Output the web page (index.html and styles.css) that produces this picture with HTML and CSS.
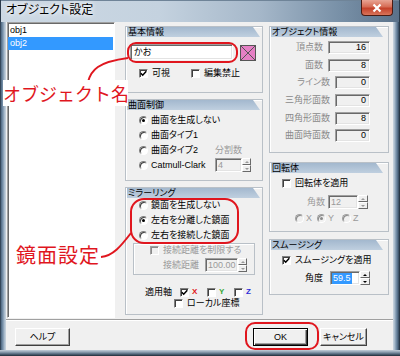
FILE: index.html
```html
<!DOCTYPE html>
<html lang="ja">
<head>
<meta charset="utf-8">
<title>オブジェクト設定</title>
<link rel="stylesheet" href="styles.css">
</head>
<body>
<div class="window">
  <div class="titlebar">
    <span class="title">オブジェクト設定</span>
    <div class="close"><svg width="12" height="10" viewBox="0 0 12 10"><path d="M2.5 1.5 L9.5 8.5 M9.5 1.5 L2.5 8.5"/></svg></div>
  </div>
  <div class="client">
    <div class="main">
      <div class="list">
        <div class="item">obj1</div>
        <div class="item sel">obj2</div>
      </div>

      <div class="col mid">
        <div class="box box-a">
          <div class="hdr">基本情報</div>
          <div class="name-row">
            <div class="edit name">かお</div>
            <svg class="swatch" width="16" height="16" viewBox="0 0 16 16"><rect x="0.5" y="0.5" width="15" height="15" fill="#e67fc5" stroke="#555"/><path d="M1 1 L15 15 M15 1 L1 15" stroke="#555" stroke-width="1" fill="none"/></svg>
          </div>
          <div class="a-cbs">
            <div class="chk w-vis"><span class="cb"><svg width="7" height="7" viewBox="0 0 7 7"><path d="M0.8 3.2 L2.7 5.2 L6.3 1.2"/></svg></span>可視</div>
            <div class="chk"><span class="cb"></span>編集禁止</div>
          </div>
        </div>

        <div class="box box-b">
          <div class="hdr">曲面制御</div>
          <div class="b-body">
            <div class="radios">
              <div class="rrow"><span class="rd on"></span>曲面を生成しない</div>
              <div class="rrow"><span class="rd"></span>曲面タイプ1</div>
              <div class="rrow"><span class="rd"></span>曲面タイプ2</div>
              <div class="rrow"><span class="rd"></span>Catmull-Clark</div>
            </div>
            <div class="div-block">
              <div class="lbl-line dis">分割数</div>
              <div class="spin dis w-div"><span class="field">4</span><span class="arrows"><i class="up"></i><i class="dn"></i></span></div>
            </div>
          </div>
        </div>

        <div class="box box-c">
          <div class="hdr">ミラーリング</div>
          <div class="radios c-radios">
            <div class="rrow"><span class="rd"></span>鏡面を生成しない</div>
            <div class="rrow"><span class="rd on"></span>左右を分離した鏡面</div>
            <div class="rrow"><span class="rd"></span>左右を接続した鏡面</div>
          </div>
          <div class="group">
            <div class="g-cb chk"><span class="cb dis-cb"></span><span class="dis">接続距離を制限する</span></div>
            <div class="g-spin"><span class="lbl dis">接続距離</span><div class="spin dis w-dist"><span class="field">100.00</span><span class="arrows"><i class="up"></i><i class="dn"></i></span></div></div>
          </div>
          <div class="axis-row">
            <span class="axis-lbl">適用軸</span>
            <div class="axis"><span class="cb"><svg width="7" height="7" viewBox="0 0 7 7"><path d="M0.8 3.2 L2.7 5.2 L6.3 1.2"/></svg></span><span class="ax-x">X</span></div>
            <div class="axis"><span class="cb"></span><span class="ax-y">Y</span></div>
            <div class="axis"><span class="cb"></span><span class="ax-z">Z</span></div>
          </div>
          <div class="local-row chk"><span class="cb"></span>ローカル座標</div>
        </div>
      </div>

      <div class="col right">
        <div class="box box-d">
          <div class="hdr">オブジェクト情報</div>
          <div class="d-rows">
            <div class="vrow"><span class="lbl">頂点数</span><span class="val wide">16</span></div>
            <div class="vrow"><span class="lbl">面数</span><span class="val wide">8</span></div>
            <div class="vrow"><span class="lbl">ライン数</span><span class="val">0</span></div>
            <div class="vrow"><span class="lbl">三角形面数</span><span class="val">0</span></div>
            <div class="vrow"><span class="lbl">四角形面数</span><span class="val">8</span></div>
            <div class="vrow"><span class="lbl">曲面時面数</span><span class="val">0</span></div>
          </div>
        </div>

        <div class="box box-e">
          <div class="hdr">回転体</div>
          <div class="e-cb chk"><span class="cb"></span>回転体を適用</div>
          <div class="e-spin"><span class="lbl dis">角数</span><div class="spin dis w-kaku"><span class="field">12</span><span class="arrows"><i class="up"></i><i class="dn"></i></span></div></div>
          <div class="e-radios">
            <div class="xr xr-x"><span class="rd dis-rd"></span><span class="dis">X</span></div>
            <div class="xr xr-y"><span class="rd dis-rd on"></span><span class="dis">Y</span></div>
            <div class="xr"><span class="rd dis-rd"></span><span class="dis">Z</span></div>
          </div>
        </div>

        <div class="box box-f">
          <div class="hdr">スムージング</div>
          <div class="f-cb chk"><span class="cb"><svg width="7" height="7" viewBox="0 0 7 7"><path d="M0.8 3.2 L2.7 5.2 L6.3 1.2"/></svg></span>スムージングを適用</div>
          <div class="f-spin"><span class="lbl">角度</span><div class="spin w-angle"><span class="field"><span class="selt">59.5</span></span><span class="arrows"><i class="up"></i><i class="dn"></i></span></div></div>
        </div>
      </div>
    </div>

    <div class="buttons">
      <div class="btn help">ヘルプ</div>
      <div class="btn ok">OK</div>
      <div class="btn cancel">キャンセル</div>
    </div>
  </div>

  <svg class="lines" width="400" height="356" viewBox="0 0 400 356">
    <path d="M88 82 C 91 70, 98 62, 128 58"/>
    <path d="M101 257 C 113 256, 121 246, 131 233"/>
  </svg>
  <div class="oval oval-a"></div>
  <div class="oval oval-c"></div>
  <div class="oval oval-ok"></div>
  <div class="note note-obj">オブジェクト名</div>
  <div class="note note-mirror">鏡面設定</div>
</div>
</body>
</html>
```
FILE: styles.css
```css
* { box-sizing: border-box; margin: 0; padding: 0; }
html, body { width: 400px; height: 356px; overflow: hidden; background: #fff; }
body {
  font-family: "Liberation Sans", "Noto Sans CJK JP", sans-serif;
  font-size: 9px;
  line-height: 1;
  color: #000;
  font-feature-settings: "palt";
}

.window {
  position: relative;
  width: 400px;
  height: 356px;
  background:
    linear-gradient(to bottom, transparent 350px, #c3cfda 350px, #8fa1b2 352px, #52677c 354px, #1f2b37 356px),
    linear-gradient(to right, #1c2834 0, #4d6680 1px, #7d96ae 3px, #b9c8d6 5px, #c9d4de 6px, #c9d4de 393px, #b9c8d6 394px, #7d96ae 396px, #4d6680 398px, #1c2834 400px);
}

.titlebar {
  height: 22px;
  display: flex;
  align-items: flex-start;
  background: linear-gradient(to right, #cdd9e4 0%, #c4d2df 40%, #a5b7c9 65%, #7890a7 85%, #5a7189 100%);
  box-shadow: inset 1px 0 0 #2a3a4a, inset -1px 0 0 #2a3a4a, inset 0 1px 0 #6f8498;
}
.title {
  margin: 3px 0 0 6px;
  font-family: "Noto Sans CJK JP", sans-serif;
  font-size: 12px;
  line-height: 12px;
  text-shadow: 0 0 4px #fff, 0 0 6px #fff;
}
.close {
  margin-left: auto;
  margin-right: 7px;
  width: 32px;
  height: 16px;
  border: 1px solid #4b1b12;
  border-top: 0;
  border-radius: 0 0 4px 4px;
  background: linear-gradient(#e8a494 0%, #d66c55 45%, #c4412a 55%, #d8745a 100%);
  display: flex;
  align-items: center;
  justify-content: center;
}
.close path { stroke: #fff; stroke-width: 2.2; fill: none; }

.client {
  margin: 0 7px 0 6px;
  height: 328px;
  background: #f0f0f0;
}

.main {
  display: flex;
  height: 298px;
  border-bottom: 1px solid #a0a0a0;
}

.list {
  margin-left: 1px;
  width: 108px;
  height: 296px;
  background: #fff;
  border: 1px solid;
  border-color: #a0a0a0 #fff #fff #a0a0a0;
  box-shadow: inset 1px 1px 0 #696969;
  padding: 1px 1px 0 0;
}
.item {
  height: 13px;
  padding-left: 2px;
  display: flex;
  align-items: center;
}
.item.sel { background: #3399ff; color: #fff; }

.col { display: flex; flex-direction: column; }
.mid { margin-left: 10px; width: 138px; }
.right { margin-left: 6px; width: 120px; }

.box {
  border: 1px solid #b9c0c7;
  box-shadow: inset 1px 1px 0 #fff;
}
.hdr {
  height: 10px;
  margin: 0 2px 0 1px;
  padding-left: 1px;
  background: linear-gradient(#a3b8ce, #bfcfdf);
  clip-path: polygon(0 0, calc(100% - 7px) 0, 100% 100%, 0 100%);
  line-height: 10px;
  white-space: nowrap;
}
.right .hdr { margin-right: 5px; }

.box-a { margin-top: 4px; height: 67px; }
.box-b { margin-top: 6px; height: 82px; }
.box-c { margin-top: 6px; height: 128px; }
.box-d { margin-top: 4px; height: 127px; }
.box-e { margin-top: 9px; height: 70px; }
.box-f { margin-top: 7px; height: 56px; }

.edit, .field, .val {
  border: 1px solid;
  border-color: #a0a0a0 #fff #fff #a0a0a0;
  box-shadow: inset 1px 1px 0 #696969, inset -1px -1px 0 #e3e3e3;
}
.edit { background: #fff; }

.name-row {
  display: flex;
  align-items: flex-start;
  margin-top: 7px;
  padding-left: 4px;
}
.name {
  width: 103px;
  height: 16px;
  padding-left: 3px;
  display: flex;
  align-items: center;
}
.swatch { margin: 1px 0 0 7px; flex: none; }

.a-cbs {
  margin-top: 7px;
  height: 11px;
  padding-left: 13px;
  display: flex;
  align-items: center;
}
.chk { display: flex; align-items: center; gap: 4px; white-space: nowrap; }
.w-vis { width: 52px; }

.cb {
  width: 9px;
  height: 9px;
  flex: none;
  background: #fff;
  border: 1px solid;
  border-color: #808080 #fff #fff #808080;
  box-shadow: inset 1px 1px 0 #404040;
  display: flex;
  align-items: center;
  justify-content: center;
}
.cb svg path { stroke: #000; stroke-width: 1.5; fill: none; }
.cb.dis-cb { background: #f0f0f0; border-color: #a0a0a0 #fff #fff #a0a0a0; box-shadow: inset 1px 1px 0 #8a8a8a; }

.rd {
  width: 9px;
  height: 9px;
  flex: none;
  border-radius: 50%;
  background: #fff;
  border: 1px solid;
  border-color: #808080 #fff #fff #808080;
  box-shadow: inset 1px 1px 0 #404040;
  display: flex;
  align-items: center;
  justify-content: center;
}
.rd.on::after {
  content: "";
  width: 3px;
  height: 3px;
  border-radius: 50%;
  background: #000;
}
.rd.dis-rd { background: #f0f0f0; border-color: #a0a0a0 #fff #fff #a0a0a0; box-shadow: inset 1px 1px 0 #8a8a8a; }
.rd.dis-rd.on::after { background: #8a8a8a; }

.dis { color: #9a9a9a; }

.b-body { display: flex; padding-top: 3px; }
.radios { width: 89px; padding-left: 13px; }
.rrow {
  height: 15px;
  display: flex;
  align-items: center;
  gap: 3px;
  white-space: nowrap;
}
.div-block { margin-top: 30px; }
.lbl-line { height: 15px; display: flex; align-items: center; }

.spin { display: flex; height: 14px; }
.spin .field {
  background: #fff;
  padding: 0 2px;
  display: flex;
  align-items: center;
}
.spin.dis .field { background: #f0f0f0; color: #9a9a9a; }
.arrows { width: 9px; display: flex; flex-direction: column; }
.arrows i {
  flex: 1;
  background: #f0f0f0;
  border: 1px solid;
  border-color: #fff #696969 #696969 #fff;
  display: flex;
  align-items: center;
  justify-content: center;
}
.arrows i::after {
  content: "";
  border-left: 2px solid transparent;
  border-right: 2px solid transparent;
}
.arrows .up::after { border-bottom: 2px solid #000; }
.arrows .dn::after { border-top: 2px solid #000; }
.spin.dis .arrows .up::after { border-bottom-color: #9a9a9a; }
.spin.dis .arrows .dn::after { border-top-color: #9a9a9a; }

.w-div .field { width: 27px; }

.c-radios { width: auto; }
.group {
  margin-left: 7px;
  width: 122px;
  height: 32px;
  border: 1px solid #b9c0c7;
  box-shadow: inset 1px 1px 0 #fff;
}
.g-cb { height: 13px; padding-left: 16px; }
.g-spin { height: 16px; display: flex; align-items: center; padding-left: 29px; }
.g-spin .lbl { width: 42px; }
.w-dist .field { width: 33px; }

.axis-row {
  margin-top: 11px;
  height: 12px;
  display: flex;
  align-items: center;
  padding-left: 19px;
}
.axis-lbl { width: 35px; }
.axis { display: flex; align-items: center; gap: 3px; width: 27px; }
.ax-x, .ax-y, .ax-z { font-size: 8px; font-weight: bold; }
.ax-x { color: #e01818; }
.ax-y { color: #3aa83a; }
.ax-z { color: #2b2bd8; }
.local-row { height: 11px; padding-left: 48px; }

.d-rows { padding-top: 2px; }
.vrow {
  height: 17.6px;
  display: flex;
  justify-content: flex-end;
  align-items: center;
  padding-right: 18px;
}
.vrow .lbl { margin-right: 5px; color: #8a8a8a; white-space: nowrap; }
.val {
  height: 13px;
  width: 35px;
  background: #f0f0f0;
  padding-right: 3px;
  display: flex;
  align-items: center;
  justify-content: flex-end;
}
.val.wide { width: 42px; }

.e-cb { margin-top: 3px; height: 14px; padding-left: 12px; }
.e-spin { margin-top: 5px; height: 14px; display: flex; align-items: center; padding-left: 37px; }
.e-spin .lbl { width: 21px; }
.w-kaku .field { width: 30px; }
.w-kaku .arrows, .w-angle .arrows { width: 10px; }
.e-radios { margin-top: 2px; height: 14px; display: flex; align-items: center; padding-left: 25px; }
.xr { display: flex; align-items: center; gap: 2px; }
.xr-x { width: 22px; }
.xr-y { width: 25px; }

.f-cb { margin-top: 3px; height: 14px; padding-left: 12px; }
.f-spin { margin-top: 4px; height: 14px; display: flex; align-items: center; padding-left: 35px; }
.f-spin .lbl { width: 25px; }
.w-angle .field { width: 30px; padding-left: 1px; }
.selt { background: #3399ff; color: #fff; padding: 1px 1px; }

.buttons {
  display: flex;
  align-items: flex-start;
  height: 30px;
  padding: 7px 26px 0 9px;
  border-top: 1px solid #fff;
}
.btn {
  height: 18px;
  display: flex;
  align-items: center;
  justify-content: center;
  background: #f0f0f0;
  border: 1px solid;
  border-color: #fff #404040 #404040 #fff;
  box-shadow: inset -1px -1px 0 #a0a0a0;
}
.help { width: 55px; }
.ok {
  margin-left: auto;
  width: 55px;
  border-color: #000;
  box-shadow: inset 1px 1px 0 #fff, inset -1px -1px 0 #404040, inset -2px -2px 0 #a0a0a0;
}
.cancel { margin-left: 12px; width: 47px; }

.lines { position: absolute; left: 0; top: 0; pointer-events: none; }
.lines path { fill: none; stroke: #e0161e; stroke-width: 2; }
.oval { position: absolute; border: 2px solid #e0161e; }
.oval-a { left: 127px; top: 42px; width: 111px; height: 21px; border-radius: 9px; }
.oval-c { left: 130px; top: 198px; width: 109px; height: 46px; border-radius: 14px; }
.oval-ok { left: 245px; top: 322px; width: 74px; height: 28px; border-radius: 10px; }
.note {
  position: absolute;
  color: #e0161e;
  font-family: "Noto Sans CJK JP", sans-serif;
  font-feature-settings: normal;
  white-space: nowrap;
}
.note-obj {
  left: 3px;
  top: 80px;
  width: 125px;
  height: 26px;
  background: #fff;
  font-size: 18px;
  line-height: 26px;
}
.note-mirror {
  left: 16px;
  top: 242px;
  font-size: 20px;
  line-height: 26px;
  letter-spacing: 1px;
}
```
